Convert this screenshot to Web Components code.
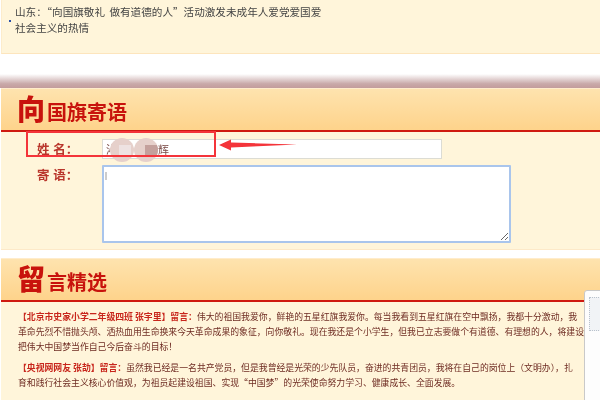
<!DOCTYPE html>
<html>
<head>
<meta charset="utf-8">
<style>
  html, body { margin: 0; padding: 0; background: #fff; }
  body { width: 600px; height: 400px; overflow: hidden; position: relative;
         font-family: "Noto Sans CJK SC", "Liberation Sans", sans-serif; }
  #page { filter: blur(0.5px); }
</style>
</head>
<body>
<div id="page">
  <notice-card>山东：“向国旗敬礼 做有道德的人”活动激发未成年人爱党爱国爱<br>社会主义的热情</notice-card>
  <shade-bar></shade-bar>
  <flag-panel big="向" rest="国旗寄语">
    <flag-form></flag-form>
  </flag-panel>
  <flag-panel big="留" rest="言精选" style="margin-top:8px;min-height:142px">
    <message-item who="【北京市史家小学二年级四班 张宇里】留言：">伟大的祖国我爱你，鲜艳的五星红旗我爱你。每当我看到五星红旗在空中飘扬，我都十分激动，我<br>革命先烈不惜抛头颅、洒热血用生命换来今天革命成果的象征，向你敬礼。现在我还是个小学生，但我已立志要做个有道德、有理想的人，将建设<br>把伟大中国梦当作自己今后奋斗的目标！</message-item>
    <message-item who="【央视网网友 张劼】留言：">虽然我已经是一名共产党员，但是我曾经是光荣的少先队员，奋进的共青团员，我将在自己的岗位上（文明办），扎<br>育和践行社会主义核心价值观，为祖员起建设祖国、实现“中国梦”的光荣使命努力学习、健康成长、全面发展。</message-item>
  </flag-panel>
</div>
<side-window></side-window>

<script>
class NoticeCard extends HTMLElement {
  constructor() {
    super();
    this.attachShadow({mode:'open'});
    this.shadowRoot.innerHTML = `<style>
      :host { display:block; height:54px; margin-left:1px; box-sizing:border-box;
        background:#fff5da; border-bottom:1px solid #fde5bd; border-left:1px solid #fdeccb;
        position:relative; padding:4px 0 0 13px;
        font-size:10.6px; line-height:16px; color:#444; word-spacing:2px; }
      i { position:absolute; left:7px; top:20px; width:2px; height:2px; background:#2a4fa8; }
    </style><i></i><slot></slot>`;
  }
}

class ShadeBar extends HTMLElement {
  constructor() {
    super();
    this.attachShadow({mode:'open'});
    this.shadowRoot.innerHTML = `<style>
      :host { display:block; height:14px; margin-top:20px;
        background:linear-gradient(#fff, #c9a9a9 70%, #c39c9c); }
    </style>`;
  }
}

class FlagPanel extends HTMLElement {
  constructor() {
    super();
    this.attachShadow({mode:'open'});
    this.shadowRoot.innerHTML = `<style>
      :host { display:block; background:#fff5da; margin-left:1px; }
      header { box-sizing:border-box; height:44px; border-top:1px solid #ffeccb; border-bottom:2px solid #cf1a10;
        background:linear-gradient(#fee3ae, #fed38b); display:flex; align-items:flex-end;
        padding:0 0 8px 16px; color:#c8120c; font-weight:700; line-height:1; }
      b { font-size:28px; width:30px; }
      span { font-size:20px; }
    </style>
    <header><b></b><span></span></header>
    <slot></slot>`;
    this.shadowRoot.querySelector('b').textContent = this.getAttribute('big');
    this.shadowRoot.querySelector('span').textContent = this.getAttribute('rest');
  }
}

class FlagForm extends HTMLElement {
  constructor() {
    super();
    this.attachShadow({mode:'open'});
    this.shadowRoot.innerHTML = `<style>
      :host { display:grid; grid-template-columns:101px auto; row-gap:6px; align-content:start;
        padding:7px 0 0 0; position:relative; height:118px; box-sizing:border-box;
        border-bottom:1px solid #fde9c8; }
      label { font-size:12.5px; font-weight:700; color:#b9352b; padding-left:36px;
        line-height:20px; word-spacing:1px; }
      .name { width:340px; height:20px; box-sizing:border-box; background:#fff; border:1px solid #dcdcd4;
        font-size:11px; line-height:18px; color:#7a4a46; padding-left:3px; }
      .name span:last-child { margin-left:41px; }
      textarea { display:block; width:409px; height:78px; box-sizing:border-box; margin:0;
        border:2px solid #a9c5ec; background:#fff; border-radius:1px; outline:none; }
      .caret { position:absolute; left:104px; top:40px; width:2px; height:8px; background:#ccc; }
      .red { position:absolute; left:25px; top:-1px; width:190px; height:26px; box-sizing:border-box;
        border:2px solid #f4343a; }
      .arrow { position:absolute; left:217px; top:7px; }
      .mask { position:absolute; top:6px; width:24px; height:24px; border-radius:50%; background:#e6d0cb; overflow:hidden; }
      .mask i { position:absolute; top:7px; height:11px; display:block; }
    </style>
    <label>姓 名：</label><div class="name"><span>沁</span><span>辉</span></div>
    <label>寄 语：</label><textarea></textarea>
    <div class="caret"></div>
    <div class="mask" style="left:109px"><i style="left:9px;width:12px;background:#eee2e2"></i></div>
    <div class="mask" style="left:133px"><i style="left:11px;width:13px;background:#c4a09c"></i></div>
    <div class="red"></div>
    <svg class="arrow" width="80" height="12" viewBox="0 0 80 12"><path d="M1 6 L13 .5 L13 3.5 L79 5.5 L13 8.5 L13 11.5 Z" fill="#f4343a"/></svg>`;
  }
}

class MessageItem extends HTMLElement {
  constructor() {
    super();
    this.attachShadow({mode:'open'});
    this.shadowRoot.innerHTML = `<style>
      :host { display:block; padding:7px 0 0 17px; white-space:nowrap;
        font-size:8.85px; line-height:15px; color:#6e2b22; }
      :host(:last-child) { padding-top:6px; }
      b { color:#c8261c; font-weight:700; }
    </style><b></b><slot></slot>`;
    this.shadowRoot.querySelector('b').textContent = this.getAttribute('who');
  }
}

class SideWindow extends HTMLElement {
  constructor() {
    super();
    this.attachShadow({mode:'open'});
    this.shadowRoot.innerHTML = `<style>
      :host { display:block; position:absolute; left:584px; top:290px; width:20px; height:114px;
        background:#fdfdfd; border:1px solid #c9c9c9; border-radius:3px 0 0 0; box-sizing:border-box;
        padding:6px 0 0 4px; }
      div { height:34px; background:#f1f3f6; border:1px dotted #b9c2cc; box-sizing:border-box; }
    </style><div></div>`;
  }
}

customElements.define('notice-card', NoticeCard);
customElements.define('shade-bar', ShadeBar);
customElements.define('flag-panel', FlagPanel);
customElements.define('flag-form', FlagForm);
customElements.define('message-item', MessageItem);
customElements.define('side-window', SideWindow);
</script>
</body>
</html>
